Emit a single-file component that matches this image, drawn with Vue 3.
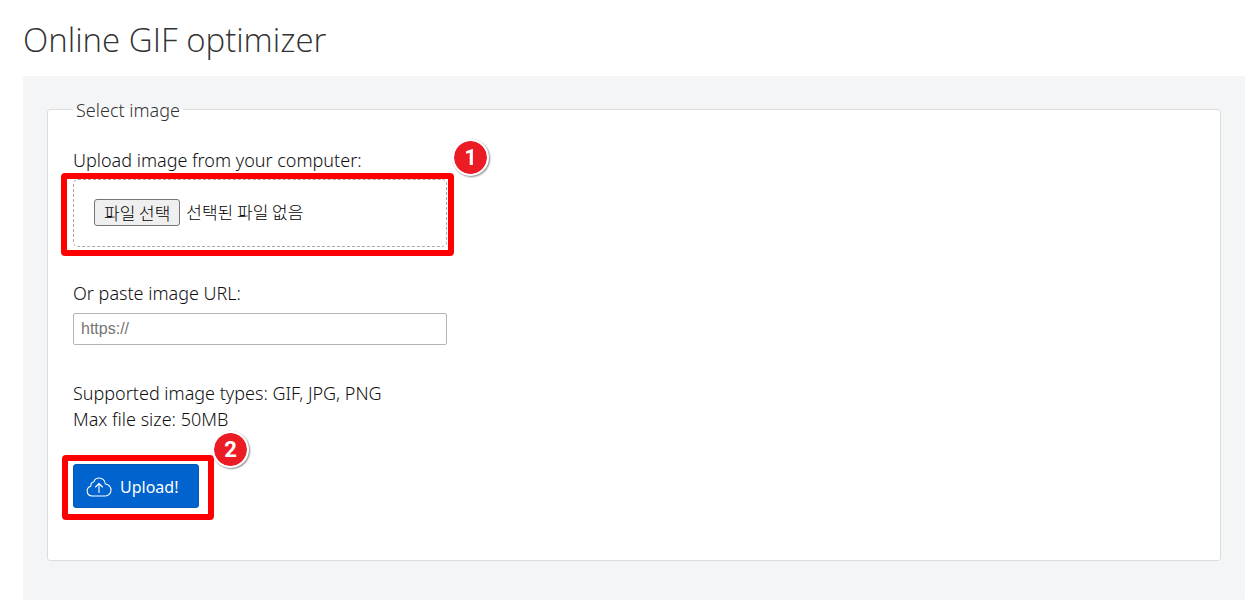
<script setup>
import { ref } from 'vue'

const fileName = ref('선택된 파일 없음')
const url = ref('')

function pick(event) {
  const file = event.target.files[0]
  fileName.value = file ? file.name : '선택된 파일 없음'
}
</script>

<template>
  <main class="page">
    <h1>Online GIF optimizer</h1>
    <form class="panel" @submit.prevent>
      <fieldset>
        <legend>Select image</legend>

        <label class="caption" for="file">Upload image from your computer:</label>
        <div class="drop">
          <span class="choose" aria-hidden="true">파일 선택</span>
          <span class="chosen">{{ fileName }}</span>
          <input id="file" class="file" type="file" accept="image/*" @change="pick" />
          <span class="frame frame-file"></span>
          <span class="badge badge-file">1</span>
        </div>

        <label class="caption" for="url">Or paste image URL:</label>
        <input id="url" v-model="url" class="url" type="text" placeholder="https://" />

        <p class="hint">Supported image types: GIF, JPG, PNG<br />Max file size: 50MB</p>

        <div class="action">
          <button class="upload" type="submit">
            <svg width="26" height="20" viewBox="0 0 26 20" fill="none" stroke="currentColor" stroke-width="1.1" stroke-linecap="round" stroke-linejoin="round" aria-hidden="true">
              <path d="M6 19a5 5 0 0 1-1.200-9.800 4.200 4.200 0 0 1 3-4.400C8.600 2.500 10.700 1 13.200 1c3.300 0 5.900 2.600 6.100 6 3.200.2 5.700 2.800 5.700 6 0 3.300-2.500 6-5.700 6z" />
              <path d="M13 15.500V6.500M9.500 10L13 6.500l3.500 3.500" />
            </svg>
            <span>Upload!</span>
          </button>
          <span class="frame frame-upload"></span>
          <span class="badge badge-upload">2</span>
        </div>
      </fieldset>
    </form>
  </main>
</template>

<style>
body {
  background: #fff;
}
</style>

<style scoped>
.page {
  padding: 16px 12px 0 23px;
  font-family: "Noto Sans", "Noto Sans CJK KR", sans-serif;
  font-size: 18px;
  font-weight: 300;
  line-height: 26px;
  color: #111;
}
h1 {
  margin: 0 0 12px;
  font-family: "Open Sans", sans-serif;
  font-size: 33px;
  font-weight: 300;
  line-height: 48px;
  color: #333;
}
.panel {
  padding: 23px 24px 39px;
  background: #f4f5f7;
  border-radius: 3px;
}
fieldset {
  min-width: 0;
  margin: 0;
  padding: 28px 25px 52px;
  background: #fff;
  border: 1px solid #dcdcdc;
  border-radius: 3px;
}
legend {
  padding: 2px 3px 0;
  line-height: 18px;
  color: #333;
}
.caption {
  display: block;
  width: fit-content;
}
.drop {
  position: relative;
  display: flex;
  align-items: center;
  gap: 6px;
  box-sizing: border-box;
  width: 374px;
  max-width: 100%;
  height: 68px;
  margin: 6px 0 33px;
  padding: 0 20px 2px;
  border: 1px dashed #aaa;
  border-radius: 5px;
  font-family: "Noto Sans CJK KR", sans-serif;
  font-size: 17px;
  color: #000;
}
.choose {
  box-sizing: border-box;
  height: 27px;
  padding: 0 9px;
  border: 1px solid #767676;
  border-radius: 3px;
  background: #efefef;
  line-height: 25px;
}
.file {
  position: absolute;
  inset: 0;
  width: 100%;
  height: 100%;
  opacity: 0;
  cursor: pointer;
}
.url {
  display: block;
  box-sizing: border-box;
  width: 374px;
  max-width: 100%;
  height: 32px;
  margin: 7px 0 35px;
  padding: 0 7px;
  border: 1px solid #b5b5b5;
  border-radius: 2px;
  font-family: "Liberation Sans", Arial, sans-serif;
  font-size: 16px;
}
.url::placeholder {
  color: #757575;
}
.hint {
  margin: 0 0 32px;
}
.action {
  position: relative;
  width: fit-content;
}
.upload {
  display: flex;
  align-items: center;
  gap: 8px;
  height: 44px;
  padding: 1px 20px 0 12px;
  border: 1px solid #0459b8;
  border-radius: 3px;
  background: #0063ce;
  color: #fff;
  font-family: "Noto Sans", sans-serif;
  font-size: 16px;
  cursor: pointer;
}
.frame {
  position: absolute;
  border: 6px solid #f00;
  border-radius: 4px;
  pointer-events: none;
}
.frame-file {
  inset: -7px -8px -10px -13px;
}
.frame-upload {
  inset: -9px -15px -12px -11px;
}
.badge {
  position: absolute;
  width: 33px;
  height: 33px;
  border: 2px solid #fff;
  border-radius: 50%;
  background: #ec1c24;
  background-clip: padding-box;
  box-shadow: 1px 1px 2px #888;
  color: #fff;
  font-family: Roboto, sans-serif;
  font-size: 22px;
  font-weight: 700;
  line-height: 33px;
  text-align: center;
}
.badge-file {
  top: -41px;
  left: 378px;
}
.badge-upload {
  top: -33px;
  left: 139px;
}
</style>
